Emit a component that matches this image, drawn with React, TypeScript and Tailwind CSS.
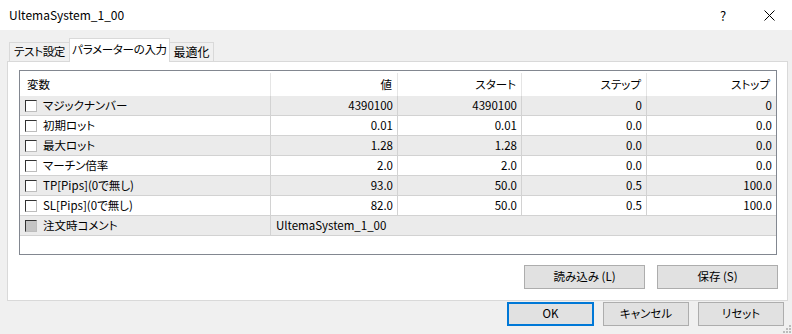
import React from 'react';

type Row = {
  name: string;
  value: string;
  start?: string;
  step?: string;
  stop?: string;
  disabled?: boolean;
};

const rows: Row[] = [
  { name: 'マジックナンバー', value: '4390100', start: '4390100', step: '0', stop: '0' },
  { name: '初期ロット', value: '0.01', start: '0.01', step: '0.0', stop: '0.0' },
  { name: '最大ロット', value: '1.28', start: '1.28', step: '0.0', stop: '0.0' },
  { name: 'マーチン倍率', value: '2.0', start: '2.0', step: '0.0', stop: '0.0' },
  { name: 'TP[Pips](0で無し)', value: '93.0', start: '50.0', step: '0.5', stop: '100.0' },
  { name: 'SL[Pips](0で無し)', value: '82.0', start: '50.0', step: '0.5', stop: '100.0' },
  { name: '注文時コメント', value: 'UltemaSystem_1_00', disabled: true },
];

const Checkbox: React.FC<{ disabled?: boolean }> = ({ disabled }) => (
  <span
    className={`w-[12px] h-[12px] shrink-0 border border-t-[#333] border-l-[#333] border-r-[#bdbdbd] border-b-[#bdbdbd] ${
      disabled ? 'bg-[#c4c4c4]' : 'bg-white'
    }`}
  />
);

const App: React.FC = () => {
  return (
    <div className="w-[792px] h-[334px] bg-[#f0f0f0] flex flex-col text-[11.5px] text-black font-['Noto_Sans_CJK_JP',sans-serif] [font-feature-settings:'palt'] leading-none overflow-hidden whitespace-nowrap">
      {/* title bar */}
      <div className="h-[30px] bg-white flex items-center shrink-0 text-[12px]">
        <span className="pl-[9px] flex-1">UltemaSystem_1_00</span>
        <span className="w-[46px] text-center text-[13px]">?</span>
        <span className="w-[46px] flex justify-center">
          <svg width="11" height="11" viewBox="0 0 11 11">
            <path d="M0.5 0.5 L10.5 10.5 M10.5 0.5 L0.5 10.5" stroke="#000" strokeWidth="1" />
          </svg>
        </span>
      </div>

      <div className="pl-[7px] pr-[4px] pt-[8px] flex flex-col">
        {/* tabs */}
        <div className="flex items-end h-[23px] pl-[2px]">
          <div className="w-[61px] h-[19px] border border-b-0 border-[#d9d9d9] flex items-center justify-center tracking-[-0.3px]">テスト設定</div>
          <div className="w-[101px] h-[24px] -ml-px -mb-px relative z-10 bg-white border border-b-0 border-[#d9d9d9] flex items-center justify-center pb-[2px] tracking-[-0.3px]">
            パラメーターの入力
          </div>
          <div className="w-[45px] h-[19px] -ml-px border border-b-0 border-[#d9d9d9] flex items-center justify-center text-[12px]">最適化</div>
        </div>

        {/* panel */}
        <div className="h-[240px] bg-white border border-[#d9d9d9] pt-[8px] pl-[11px] pr-[9px] pb-[11px] flex flex-col">
          <div className="w-[758px] h-[185px] border border-[#828790] flex flex-col">
            <div className="grid grid-cols-[251px_127px_124px_125px_129px] h-[25px]">
              <div className="flex items-center pl-[7px] border-r border-[#e5e5e5] mt-[2px]">変数</div>
              <div className="flex items-center justify-end pr-[5px] border-r border-[#e5e5e5] mt-[2px]">値</div>
              <div className="flex items-center justify-end pr-[5px] border-r border-[#e5e5e5] mt-[2px]">スタート</div>
              <div className="flex items-center justify-end pr-[5px] border-r border-[#e5e5e5] mt-[2px]">ステップ</div>
              <div className="flex items-center justify-end pr-[6px] mt-[2px]">ストップ</div>
            </div>
            {rows.map((r, i) => (
              <div
                key={i}
                className={`grid grid-cols-[251px_127px_124px_125px_129px] h-[20px] border-b border-[#d2d2d2] ${
                  i % 2 === 0 ? 'bg-[#ebebeb]' : 'bg-white'
                }`}
              >
                <div className="flex items-center pl-[5px] gap-[6px] border-r border-[#d2d2d2]">
                  <Checkbox disabled={r.disabled} />
                  <span>{r.name}</span>
                </div>
                {r.disabled ? (
                  <div className="col-span-4 flex items-center pl-[5px]">{r.value}</div>
                ) : (
                  <>
                    <div className="flex items-center justify-end pr-[4px] border-r border-[#d2d2d2]">{r.value}</div>
                    <div className="flex items-center justify-end pr-[4px] border-r border-[#d2d2d2]">{r.start}</div>
                    <div className="flex items-center justify-end pr-[4px] border-r border-[#d2d2d2]">{r.step}</div>
                    <div className="flex items-center justify-end pr-[4px]">{r.stop}</div>
                  </>
                )}
              </div>
            ))}
          </div>

          <div className="flex justify-end gap-[12px] mt-[10px]">
            <button className="w-[121px] h-[24px] bg-[#e1e1e1] border border-[#adadad]">読み込み (L)</button>
            <button className="w-[121px] h-[24px] bg-[#e1e1e1] border border-[#adadad]">保存 (S)</button>
          </div>
        </div>
      </div>

      {/* dialog buttons */}
      <div className="flex justify-end gap-[9px] pr-[8px] mt-[1px] relative">
        <button className="w-[87px] h-[24px] bg-[#e1e1e1] border-2 border-[#0078d7]">OK</button>
        <button className="w-[86px] h-[24px] bg-[#e1e1e1] border border-[#adadad]">キャンセル</button>
        <button className="w-[86px] h-[24px] bg-[#e1e1e1] border border-[#adadad]">リセット</button>
        <svg className="absolute right-0 bottom-[-8px]" width="10" height="10" viewBox="0 0 10 10">
          <rect x="7" y="1" width="2" height="2" fill="#bcbcbc" />
          <rect x="4" y="4" width="2" height="2" fill="#bcbcbc" />
          <rect x="7" y="4" width="2" height="2" fill="#bcbcbc" />
          <rect x="1" y="7" width="2" height="2" fill="#bcbcbc" />
          <rect x="4" y="7" width="2" height="2" fill="#bcbcbc" />
          <rect x="7" y="7" width="2" height="2" fill="#bcbcbc" />
        </svg>
      </div>
    </div>
  );
};

export default App;
